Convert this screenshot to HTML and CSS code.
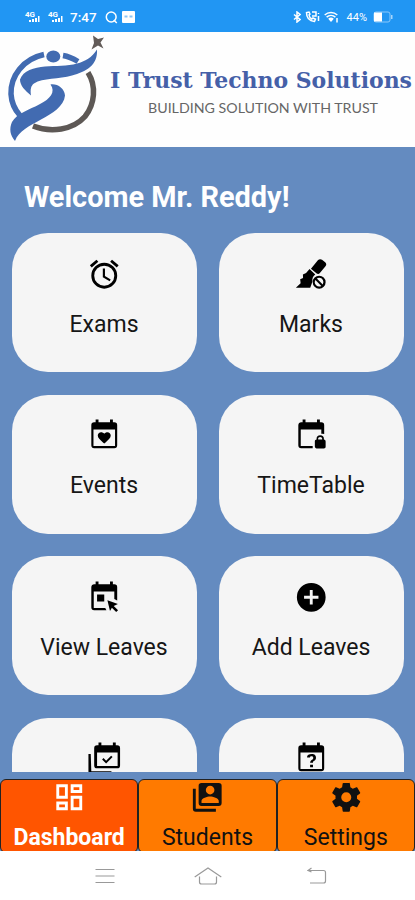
FILE: index.html
```html
<!DOCTYPE html>
<html lang="en">
<head>
    <meta charset="UTF-8">
    <meta name="viewport" content="width=device-width, initial-scale=1.0">
    <title>I Trust Techno Solutions</title>
    <link rel="stylesheet" href="styles.css">
</head>
<body>
    <div class="status-bar">
        <div class="status-left">
            <svg class="signal" width="15" height="14" viewBox="0 0 15 14">
                <text x="0" y="6.5" class="signal-text" textLength="10">4G</text>
                <path d="M4 10h2v2H4zM7 9h2v3H7zM10 8h2v4h-2zM13 6h1.5v6H13z"/>
            </svg>
            <svg class="signal" width="15" height="14" viewBox="0 0 15 14">
                <text x="0" y="6.5" class="signal-text" textLength="10">4G</text>
                <path d="M4 10h2v2H4zM7 9h2v3H7zM10 8h2v4h-2zM13 6h1.5v6H13z"/>
            </svg>
            <span class="time">7:47</span>
            <svg class="search" width="13" height="13" viewBox="0 0 13 13"><circle cx="6.2" cy="6" r="4.9"/><path d="M8.8 9l3 3"/></svg>
            <svg width="13" height="12" viewBox="0 0 13 12"><rect width="13" height="12" rx="1"/><path class="badge-dots" d="M2.5 5.5h3M7.5 5.5h3"/></svg>
        </div>
        <div class="status-right">
            <svg class="line" width="8" height="12" viewBox="0 0 8 12"><path d="M1 3.5l6 5-3 2.5V1l3 2.500-6 5"/></svg>
            <svg class="line" width="15" height="12" viewBox="0 0 15 12"><path d="M1.5 1.5c0 5 3 8.500 8 9l1-2.300-2.500-1.200-1.200 1C5 7 4.200 5.500 4 4l1-1-1-2zM7 1h4v4H7M13.500 2v1M13.500 5v5"/></svg>
            <svg width="15" height="12" viewBox="0 0 15 12"><path d="M7 11L4.200 7.700a4.200 4.200 0 0 1 5.600 0z"/><path class="wave" d="M.7 4a9.500 9.500 0 0 1 12.600 0M2.600 6.100a6.700 6.700 0 0 1 8.800 0M13 7v4.500"/></svg>
            <span class="percent">44%</span>
            <svg width="20" height="12" viewBox="0 0 20 12"><rect class="battery" x="1" y="1" width="16" height="10" rx="2"/><rect x="1" y="1.500" width="8" height="9"/><path d="M18 4h1.500v4H18z" opacity=".6"/></svg>
        </div>
    </div>

    <header class="brand">
        <svg width="415" height="115" viewBox="0 32 415 115">
            <g class="ring">
                <path class="ring-blue" d="M44 54.500C23 59 10.500 76 11 94c.5 9 4 16 9 21.500"/>
                <path class="ring-blue" d="M63 55.500c6 1 10 3 15 6"/>
                <path class="ring-gray" d="M88 72.500C96.500 86 95 104 85 116.500 73 130 51 133 33 126"/>
            </g>
            <g class="figure">
                <ellipse cx="53.300" cy="56.500" rx="7" ry="6"/>
                <path d="M97 49.500c-5 8-12 12-20 14-10 3-21 2-32 3-11 1-22 4-25 13 0 6 5 11 11 16-1-6 0-10 3-12 9-6 25-4 38-8 14-4 26-10 25-26z"/>
                <path d="M50.500 84.500c7-1 14 4 14.500 11-1 11-13 18-24 24-12 7-22 11-26 21.500-5-6-6-12-3-19 5-9 17-12 28-18 10-5 16-12 10.500-19.500z"/>
            </g>
            <path class="star" d="M93 35.500l5 3.500 6-1.500-3.500 5 3 6-5.500-3-6.500 4 2.500-6.500z"/>
            <text class="brand-name" x="110" y="88" textLength="302" lengthAdjust="spacingAndGlyphs">I Trust Techno Solutions</text>
            <text class="brand-tagline" x="148" y="113" textLength="230" lengthAdjust="spacingAndGlyphs">BUILDING SOLUTION WITH TRUST</text>
        </svg>
    </header>

    <main class="content">
        <h1>Welcome Mr. Reddy!</h1>
        <div class="cards">
            <a class="card">
                <svg class="icon" viewBox="0 0 24 24"><path d="M12 20a7 7 0 0 1-7-7 7 7 0 0 1 7-7 7 7 0 0 1 7 7 7 7 0 0 1-7 7m0-16a9 9 0 0 0-9 9 9 9 0 0 0 9 9 9 9 0 0 0 9-9 9 9 0 0 0-9-9m.5 4H11v6l4.750 2.850.750-1.230-4-2.370V8M7.880 3.390L6.600 1.860 2 5.710l1.290 1.530 4.590-3.850M22 5.720l-4.600-3.860-1.290 1.530 4.600 3.860L22 5.720z"/></svg>
                <span>Exams</span>
            </a>
            <a class="card">
                <svg class="icon" viewBox="0 0 24 24">
                    <path d="M16.600 2.200c.8-.8 2-.9 2.900-.3l2.200 1.700c.9.7 1 2 .2 2.900l-3.900 4.700c-.6.700-1.500.8-2.200.3l-4-3.300zM10.800 8.400l4 3.700c-1.800 1.200-2.300 3-2 5.100l-1.500 4.200H1.300l3.300-3.100-.3-2.900 2-.8-.1-2.500 2.200-.9z"/>
                    <path fill-rule="evenodd" d="M17.500 13a4.500 4.500 0 1 0 0 9 4.500 4.500 0 0 0 0-9m0 1.500a3 3 0 0 1 2.500 4.600l-4.100-4.100a3 3 0 0 1 1.600-.5m-2.600 1.500l4.100 4.100a3 3 0 0 1-4.100-4.100"/>
                </svg>
                <span>Marks</span>
            </a>
            <a class="card">
                <svg class="icon" viewBox="0 0 24 24"><path d="M19 19.500H4.500V8h15v11.500M16 1v2H8V1H6v2H5a2 2 0 0 0-2 2v14a2 2 0 0 0 2 2h14a2 2 0 0 0 2-2V5a2 2 0 0 0-2-2h-1V1M12 17.800l-.7-.6C8.900 15.100 7.500 13.800 7.500 12.200c0-1.300 1-2.300 2.300-2.300.8 0 1.600.4 2.200 1 .6-.6 1.400-1 2.200-1 1.300 0 2.300 1 2.300 2.300 0 1.600-1.400 2.900-3.800 5z"/></svg>
                <span>Events</span>
            </a>
            <a class="card">
                <svg class="icon" viewBox="0 0 24 24"><path d="M13 21H5a2 2 0 0 1-2-2V5c0-1.100.9-2 2-2h1V1h2v2h8V1h2v2h1a2 2 0 0 1 2 2v6.100a4 4 0 0 0-2-.1V8H4.700v11.500H13zm7.800-6v-.5a2.500 2.500 0 0 0-5.100 0v.5c-.6 0-1.200.6-1.200 1.200v3.700c0 .7.600 1.300 1.200 1.300h5.100c.7 0 1.200-.6 1.200-1.200v-3.700c0-.7-.5-1.300-1.200-1.300m-1.200 0h-2.800v-.5c0-.8.6-1.300 1.400-1.300s1.400.5 1.400 1.300z"/></svg>
                <span>TimeTable</span>
            </a>
            <a class="card">
                <svg class="icon" viewBox="0 0 24 24"><path d="M13.500 21H5a2 2 0 0 1-2-2V5c0-1.100.9-2 2-2h1V1h2v2h8V1h2v2h1a2 2 0 0 1 2 2v9.300l-2-1V8H4.700v11.500h8zM7 10h5v5H7zM14.200 14l7.300 2.700-2.900 1.300 3 3-1.300 1.300-3-3-1.300 2.300z"/></svg>
                <span>View Leaves</span>
            </a>
            <a class="card">
                <svg class="icon" viewBox="0 0 24 24"><path d="M17 13h-4v4h-2v-4H7v-2h4V7h2v4h4m-5-9A10 10 0 0 0 2 12a10 10 0 0 0 10 10 10 10 0 0 0 10-10A10 10 0 0 0 12 2z"/></svg>
                <span>Add Leaves</span>
            </a>
            <a class="card">
                <svg class="icon" viewBox="0 0 24 24"><path d="M21.300 17.400V8H7v9.400h14.300M21 3a2 2 0 0 1 2 2v12a2 2 0 0 1-2 2H7a2 2 0 0 1-2-2V5a2 2 0 0 1 2-2h1V1h2v2h8V1h2v2h1M3 21h14v2H3a2 2 0 0 1-2-2V9h1.600zM17.800 11.200l-4.500 4.500-2.800-2.800 1-1 1.800 1.800 3.500-3.500z"/></svg>
            </a>
            <a class="card">
                <svg class="icon" viewBox="0 0 24 24"><path d="M6 1v2H5a2 2 0 0 0-2 2v14a2 2 0 0 0 2 2h14a2 2 0 0 0 2-2V5a2 2 0 0 0-2-2h-1V1h-2v2H8V1M4.500 8h15v11.500h-15zm7.900 1c-1 0-1.800.2-2.400.6-.6.4-.9 1-.9 1.900h2c0-.3.1-.5.3-.7.2-.1.5-.2.8-.2.4 0 .7.1.9.3.2.2.3.5.3.8 0 .3-.1.6-.2.8-.2.3-.4.5-.7.6-.5.4-.8.7-1 .9-.2.3-.3.7-.3 1.200h2c0-.3 0-.6.1-.8.1-.2.3-.3.5-.5.5-.2.8-.5 1.100-.9.3-.4.4-.8.4-1.300 0-.8-.2-1.500-.7-2-.5-.4-1.300-.7-2.200-.7M11.200 16.500v1.700h2v-1.700z"/></svg>
            </a>
        </div>
    </main>

    <nav class="tabs">
        <a class="tab active">
            <svg class="icon" viewBox="0 0 24 24"><path fill-rule="evenodd" d="M19 5v2h-4V5h4M9 5v6H5V5h4m10 8v6h-4v-6h4M9 17v2H5v-2h4M21 3h-8v6h8V3M11 3H3v10h8V3m10 8h-8v10h8V11m-10 4H3v6h8v-6z"/></svg>
            <span>Dashboard</span>
        </a>
        <a class="tab">
            <svg class="icon" viewBox="0 0 24 24"><path fill-rule="evenodd" d="M4 6H2v14a2 2 0 0 0 2 2h14v-2H4V6m16-4H8a2 2 0 0 0-2 2v12a2 2 0 0 0 2 2h12a2 2 0 0 0 2-2V4a2 2 0 0 0-2-2m-6 2a3 3 0 0 1 3 3 3 3 0 0 1-3 3 3 3 0 0 1-3-3 3 3 0 0 1 3-3m6 12H8v-1.500c0-2 4-3.100 6-3.100s6 1.100 6 3.100z"/></svg>
            <span>Students</span>
        </a>
        <a class="tab">
            <svg class="icon" viewBox="0 0 24 24"><path d="M12 15.500A3.500 3.500 0 0 1 8.500 12 3.500 3.500 0 0 1 12 8.500a3.500 3.500 0 0 1 3.500 3.500 3.500 3.500 0 0 1-3.500 3.500m7.430-2.530c.04-.32.07-.64.07-.97 0-.33-.03-.66-.07-1l2.110-1.630c.19-.15.24-.42.12-.64l-2-3.460c-.12-.22-.39-.31-.61-.22l-2.490 1c-.52-.39-1.060-.73-1.690-.98l-.37-2.650A.506.506 0 0 0 14 2h-4c-.25 0-.46.18-.5.42l-.37 2.650c-.63.25-1.170.59-1.690.98l-2.490-1c-.22-.09-.49 0-.61.22l-2 3.460c-.13.22-.07.49.12.64L4.570 11c-.04.34-.07.67-.07 1 0 .33.03.65.07.97l-2.110 1.660c-.19.15-.25.42-.12.64l2 3.460c.12.22.39.3.61.22l2.490-1.010c.52.4 1.060.74 1.690.99l.37 2.650c.04.24.25.42.5.42h4c.25 0 .46-.18.5-.42l.37-2.650c.63-.26 1.170-.59 1.690-.99l2.490 1.010c.22.08.49 0 .61-.22l2-3.460c.12-.22.07-.49-.12-.64l-2.110-1.660z"/></svg>
            <span>Settings</span>
        </a>
    </nav>

    <div class="system-nav">
        <svg width="20" height="18" viewBox="0 0 20 18"><path d="M.5 2.500h19M.5 9h19M.5 15.500h19"/></svg>
        <svg width="28" height="18" viewBox="0 0 28 18"><path d="M.7 10L14 1l13.300 9M5.500 9.500v5.500a2 2 0 0 0 2 2h13a2 2 0 0 0 2-2V9.500"/></svg>
        <svg width="20" height="18" viewBox="0 0 20 18"><path d="M4.500 1L1 3.500h15.500a2 2 0 0 1 2 2V14a2 2 0 0 1-2 2H3M1 3.500L4.500 5"/></svg>
    </div>
</body>
</html>
```
FILE: styles.css
```css
* {
    margin: 0;
    padding: 0;
    box-sizing: border-box;
}

body {
    width: 415px;
    height: 900px;
    overflow: hidden;
    display: flex;
    flex-direction: column;
    font-family: Roboto, sans-serif;
    background: #fff;
}

svg {
    display: block;
    flex: none;
}

.status-bar {
    height: 32px;
    flex: none;
    display: flex;
    justify-content: space-between;
    align-items: center;
    padding: 2px 22px 0 25px;
    background: #2196f3;
    color: #fff;
    fill: #fff;
}

.status-left,
.status-right {
    display: flex;
    align-items: center;
}

.signal {
    margin-right: 8px;
}

.signal-text {
    font-size: 8px;
    font-weight: 700;
}

.time {
    width: 27px;
    margin: 0 8px 0 -1px;
    font-size: 13.5px;
    font-weight: 500;
}

.search {
    margin-right: 4px;
    fill: none;
    stroke: #fff;
    stroke-width: 1.5;
}

.badge-dots {
    stroke: #8ac5f7;
    stroke-width: 2;
}

.status-right {
    gap: 4px;
}

.line,
.wave {
    fill: none;
    stroke: #fff;
    stroke-width: 1.5;
}

.percent {
    margin: 0 2px 0 4px;
    font-size: 11px;
}

.battery {
    fill: none;
    stroke: #8ac8fb;
}

.brand {
    height: 115px;
    flex: none;
    background: #fefefe;
}

.ring {
    fill: none;
    stroke-width: 5.5;
}

.ring-blue {
    stroke: #426bb1;
}

.ring-gray {
    stroke: #5d5855;
}

.figure {
    fill: #426bb1;
}

.star {
    fill: #625b58;
}

.brand-name {
    font-family: "DejaVu Serif", serif;
    font-size: 22px;
    font-weight: 700;
    fill: #4560a8;
}

.brand-tagline {
    font-family: Lato, sans-serif;
    font-size: 14px;
    fill: #666;
}

.content {
    height: 625px;
    flex: none;
    overflow: hidden;
    padding: 32px 11px 0 12px;
    background: #648bc0;
}

h1 {
    height: 54px;
    padding-left: 12px;
    font-size: 28.9px;
    line-height: 36px;
    font-weight: 700;
    color: #fff;
    white-space: nowrap;
}

.cards {
    display: grid;
    grid-template-columns: 185px 185px;
    grid-auto-rows: 139px;
    gap: 22.6px 22px;
}

.card {
    display: flex;
    flex-direction: column;
    align-items: center;
    padding-top: 23.5px;
    border-radius: 36px;
    background: #f5f5f5;
    color: #000;
}

.icon {
    width: 34.5px;
    height: 34.5px;
    fill: currentColor;
}

.card span {
    margin-top: 19.5px;
    padding-right: 1px;
    font-size: 23px;
    line-height: 28px;
    color: #161616;
    white-space: nowrap;
}

.tabs {
    height: 79px;
    flex: none;
    display: grid;
    grid-template-columns: repeat(3, 1fr);
    padding-top: 7px;
    background: #648bc0;
}

.tab {
    display: flex;
    flex-direction: column;
    align-items: center;
    border: 1.5px solid #222;
    border-radius: 6px;
    background: #ff7a00;
    color: #111;
}

.tab.active {
    background: #ff5500;
    color: #fff;
}

.tab span {
    margin-top: 9.5px;
    font-size: 23px;
    line-height: 28px;
    white-space: nowrap;
}

.tab.active span {
    font-weight: 700;
}

.system-nav {
    flex: 1;
    display: flex;
    justify-content: space-between;
    align-items: center;
    padding: 0 88px 0 95px;
    background: #fff;
}

.system-nav svg:nth-child(2) {
    margin-right: 7px;
}

.system-nav path {
    fill: none;
    stroke: #999;
    stroke-width: 1.2;
}
```
